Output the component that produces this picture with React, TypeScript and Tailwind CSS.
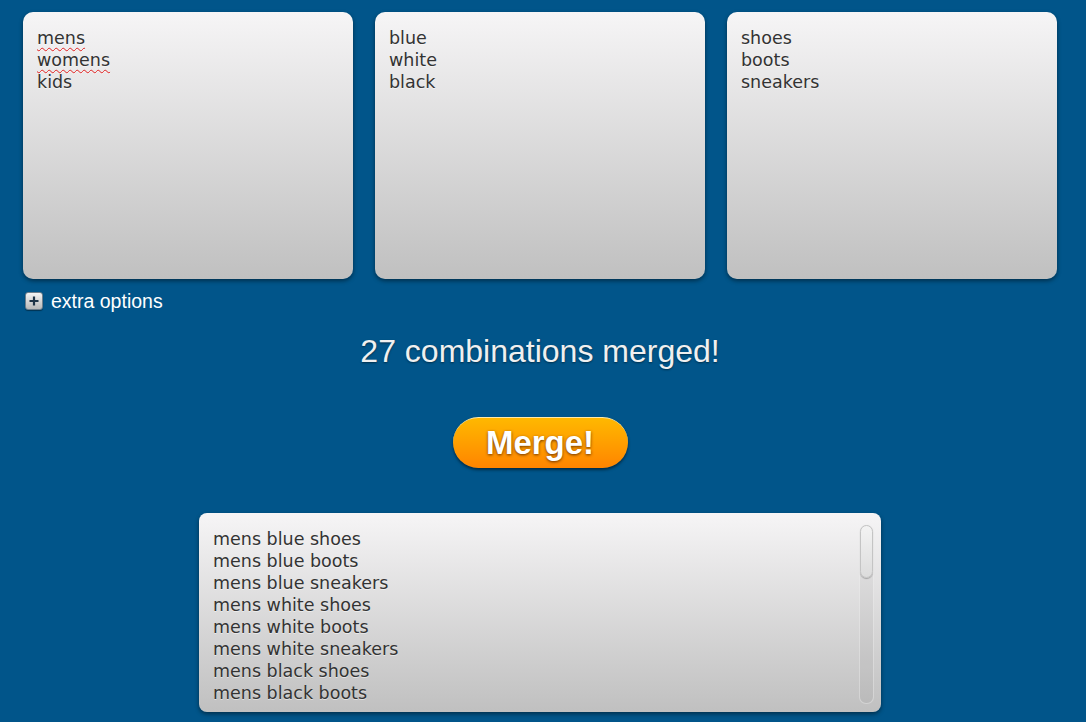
import React from "react";

const lists = [
  { items: ["mens", "womens", "kids"], flagged: ["mens", "womens"] },
  { items: ["blue", "white", "black"], flagged: [] },
  { items: ["shoes", "boots", "sneakers"], flagged: [] },
];

const results = [
  "mens blue shoes",
  "mens blue boots",
  "mens blue sneakers",
  "mens white shoes",
  "mens white boots",
  "mens white sneakers",
  "mens black shoes",
  "mens black boots",
];

const PlusIcon = () => (
  <div className="w-[18px] h-[18px] rounded-[3px] bg-gradient-to-b from-[#f4f4f4] to-[#b9b9b9] border border-[#6f7f8c] flex items-center justify-center shadow-[0_1px_1px_rgba(0,0,0,0.4)]">
    <svg width="12" height="12" viewBox="0 0 12 12">
      <path d="M6 1.5v9M1.5 6h9" stroke="#1f3447" strokeWidth="2.2" />
    </svg>
  </div>
);

export default function App() {
  return (
    <div className="min-h-screen bg-[#01558a] pt-[12px] pl-[23px] font-['Liberation_Sans',Arial,sans-serif]">
      <div className="w-[1034px]">
        <div className="grid grid-cols-3 gap-[22px]">
          {lists.map((list, i) => (
            <div
              key={i}
              className="h-[267px] rounded-[10px] bg-gradient-to-b from-[#f6f5f6] to-[#c0c0c0] shadow-[0_2px_4px_rgba(0,0,0,0.45)] pt-[15px] px-[14px] font-['DejaVu_Sans',Verdana,sans-serif] text-[17.5px] leading-[22px] text-[#333] [text-shadow:0_1px_0_rgba(255,255,255,0.5)]"
            >
              {list.items.map((item) => (
                <div key={item}>
                  <span
                    className={
                      list.flagged.includes(item)
                        ? "underline decoration-wavy decoration-[#e02020] decoration-1 underline-offset-[3px]"
                        : ""
                    }
                  >
                    {item}
                  </span>
                </div>
              ))}
            </div>
          ))}
        </div>

        <div className="mt-[11px] h-[22px] flex items-center gap-[8px] pl-[2px]">
          <PlusIcon />
          <span className="text-white text-[19.5px] leading-[22px]">extra options</span>
        </div>

        <div className="mt-[19px] h-[40px] leading-[40px] text-center text-[32px] text-[#f0f0f0] [text-shadow:0_1px_2px_rgba(0,0,0,0.45)]">
          27 combinations merged!
        </div>

        <div className="mt-[46px] flex justify-center">
          <button className="w-[175px] h-[51px] rounded-full bg-gradient-to-b from-[#ffb800] to-[#ff8400] border-t border-[#ffe9a8] shadow-[0_2px_3px_rgba(0,0,0,0.5)] flex items-center justify-center text-white font-bold text-[33px] [text-shadow:0_1px_3px_rgba(90,40,0,0.9)]">
            Merge!
          </button>
        </div>

        <div className="mt-[45px] flex justify-center">
          <div className="w-[682px] h-[199px] rounded-[8px] bg-gradient-to-b from-[#f6f5f6] to-[#c0c0c0] shadow-[0_2px_4px_rgba(0,0,0,0.45)] flex">
            <div className="flex-1 pt-[15px] pl-[14px] font-['DejaVu_Sans',Verdana,sans-serif] text-[17.5px] leading-[22px] text-[#333] [text-shadow:0_1px_0_rgba(255,255,255,0.5)]">
              {results.map((r) => (
                <div key={r}>{r}</div>
              ))}
            </div>
            <div className="w-[15px] mt-[11px] mb-[8px] mr-[7px] rounded-[7px] bg-[rgba(0,0,0,0.04)] border border-[rgba(255,255,255,0.35)] flex flex-col">
              <div className="h-[53px] rounded-[7px] bg-gradient-to-b from-[#f3f3f3] to-[#dcdcdc] border border-[#c4c4c4] shadow-[0_1px_1px_rgba(0,0,0,0.25)]" />
            </div>
          </div>
        </div>
      </div>
    </div>
  );
}
